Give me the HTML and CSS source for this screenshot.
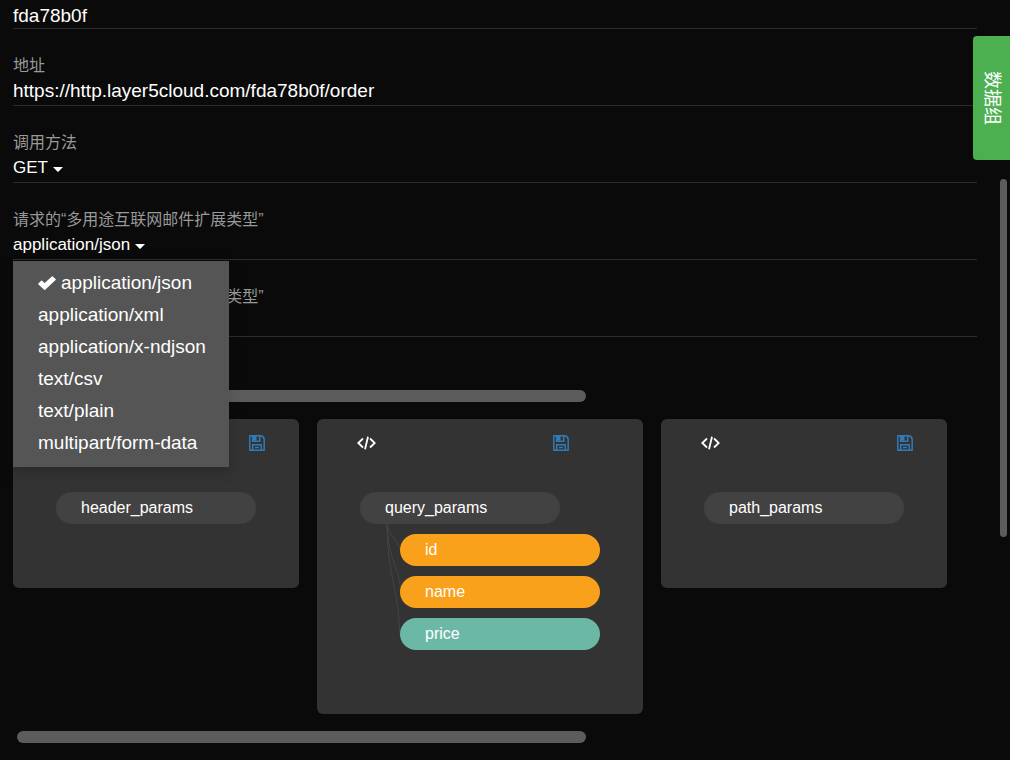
FILE: index.html
```html
<!DOCTYPE html>
<html lang="zh-CN">
<head>
<meta charset="utf-8">
<meta name="viewport" content="width=device-width, initial-scale=1">
<title>fda78b0f</title>
<link rel="stylesheet" href="styles.css">
</head>
<body>
<svg class="sprite" aria-hidden="true">
  <symbol id="caret" viewBox="0 0 10 5"><path d="M0 0h10L5.600 4.600a.9.9 0 0 1-1.200 0z" fill="currentColor"/></symbol>
  <symbol id="check" viewBox="0 0 18 14"><path d="M.9 8 3.600 5.300 6.600 8.100 14.300.9 17.100 3.600 6.700 13.300z" fill="currentColor" stroke="currentColor" stroke-width="1.400" stroke-linejoin="round"/></symbol>
  <symbol id="code" viewBox="0 0 19 14"><path d="M6 2.500 1.300 7 6 11.500M13 2.500 17.700 7 13 11.500M11 .8 8 13.200" fill="none" stroke="currentColor" stroke-width="1.800"/></symbol>
  <symbol id="save" viewBox="0 0 16 16"><path d="M.8.8h11.200q3.200 1 3.200 4v10.400H.8zM3.700 15V9.800h8.600V15M3.700 1v5.300h7V1M6 12.500h4" fill="none" stroke="currentColor" stroke-width="1.500"/><path d="M4 1h3.500v4.500H4z" fill="currentColor"/></symbol>
</svg>

<button class="side-tab" type="button">数据组</button>
<div class="page-scroll" aria-hidden="true"></div>

<main class="page">
  <form class="fields">
    <div class="field field-first">
      <input class="value" type="text" value="fda78b0f" aria-label="ID">
    </div>
    <div class="field">
      <label class="label" for="address">地址</label>
      <input class="value" id="address" type="text" value="https://http.layer5cloud.com/fda78b0f/order">
    </div>
    <div class="field">
      <label class="label" for="method">调用方法</label>
      <div class="value picker">
        <select class="select" id="method"><option>GET</option></select>
        <svg class="caret"><use href="#caret"/></svg>
      </div>
    </div>
    <div class="field">
      <label class="label" for="request-type">请求的“多用途互联网邮件扩展类型”</label>
      <button class="value picker" id="request-type" type="button" aria-haspopup="listbox" aria-expanded="true">application/json <svg class="caret"><use href="#caret"/></svg></button>
      <ul class="menu" role="listbox" aria-labelledby="request-type">
        <li class="option" role="option" aria-selected="true"><svg class="check"><use href="#check"/></svg>application/json</li>
        <li class="option" role="option">application/xml</li>
        <li class="option" role="option">application/x-ndjson</li>
        <li class="option" role="option">text/csv</li>
        <li class="option" role="option">text/plain</li>
        <li class="option" role="option">multipart/form-data</li>
      </ul>
    </div>
    <div class="field">
      <label class="label" for="response-type">响应的“多用途互联网邮件扩展类型”</label>
      <div class="value picker">
        <select class="select" id="response-type"><option>application/json</option></select>
        <svg class="caret"><use href="#caret"/></svg>
      </div>
    </div>
  </form>

  <section class="params">
    <div class="bar" aria-hidden="true"></div>
    <div class="cards">
      <article class="card">
        <div class="tools">
          <button class="tool" type="button" aria-label="代码"><svg class="icon-code"><use href="#code"/></svg></button>
          <button class="tool tool-save" type="button" aria-label="保存"><svg class="icon-save"><use href="#save"/></svg></button>
        </div>
        <div class="node">header_params</div>
      </article>
      <article class="card">
        <div class="tools">
          <button class="tool" type="button" aria-label="代码"><svg class="icon-code"><use href="#code"/></svg></button>
          <button class="tool tool-save" type="button" aria-label="保存"><svg class="icon-save"><use href="#save"/></svg></button>
        </div>
        <div class="node">query_params</div>
        <div class="children">
          <svg class="links" viewBox="0 0 16 112" aria-hidden="true"><path d="M1 0Q2 8 7 13T14 25M1 0Q2 24 9 42T14 68M1 0Q1 30 7 56T14 110"/></svg>
          <div class="node node-orange">id</div>
          <div class="node node-orange">name</div>
          <div class="node node-teal">price</div>
        </div>
      </article>
      <article class="card">
        <div class="tools">
          <button class="tool" type="button" aria-label="代码"><svg class="icon-code"><use href="#code"/></svg></button>
          <button class="tool tool-save" type="button" aria-label="保存"><svg class="icon-save"><use href="#save"/></svg></button>
        </div>
        <div class="node">path_params</div>
      </article>
    </div>
    <div class="bar" aria-hidden="true"></div>
  </section>
</main>
</body>
</html>
```
FILE: styles.css
```css
* { box-sizing: border-box; }

body {
  margin: 0;
  background: #0a0a0a;
  color: #fff;
  font-family: "Liberation Sans", "Noto Sans CJK SC", sans-serif;
  font-size: 19px;
}

button, input, select { font-family: inherit; }

.sprite { display: none; }

.page { padding: 0 33px 16px 13px; }

.field {
  position: relative;
  padding: 25px 0 2px;
  border-bottom: 1px solid #2c2c2c;
}

.field-first { padding: 3px 0 0; }

.label {
  display: block;
  color: #999;
  font-size: 16px;
  line-height: 24px;
}

.value {
  display: block;
  width: 100%;
  height: 25px;
  padding: 0;
  border: 0;
  outline: 0;
  background: none;
  color: #fff;
  font-size: 19px;
  line-height: 25px;
}

.picker {
  display: flex;
  align-items: center;
  gap: 5px;
  font-size: 17px;
}

.select {
  appearance: none;
  padding: 0;
  border: 0;
  background: none;
  color: #fff;
  font-size: 17px;
}

.caret { width: 10px; height: 5px; margin-top: 3px; }

.menu {
  position: absolute;
  top: calc(100% + 2px);
  left: 0;
  z-index: 2;
  min-width: 216px;
  margin: 0;
  padding: 6px 22px 8px 25px;
  background: #555;
  box-shadow: 0 6px 12px rgba(0, 0, 0, 0.18);
  list-style: none;
}

.option {
  display: flex;
  align-items: center;
  gap: 5px;
  line-height: 32px;
}

.check { width: 18px; height: 14px; }

.params {
  display: flex;
  flex-direction: column;
  gap: 17px;
  padding-top: 53px;
}

.bar {
  width: 59%;
  height: 12px;
  margin-left: 4px;
  border-radius: 6px;
  background: #5c5c5c;
}

.cards {
  display: flex;
  align-items: flex-start;
  gap: 18px;
}

.card {
  flex: none;
  padding: 15px 43px 64px;
  border-radius: 6px;
  background: #333;
}

.tools {
  display: flex;
  align-items: center;
  justify-content: space-between;
  width: 212px;
  height: 18px;
  margin: 0 -9px 40px -3px;
}

.tool {
  display: flex;
  padding: 0;
  border: 0;
  background: none;
  color: #fff;
}

.tool-save { color: #337ab7; }

.icon-code { width: 19px; height: 14px; }
.icon-save { width: 16px; height: 16px; }

.node {
  position: relative;
  width: 200px;
  padding: 0 25px;
  border-radius: 16px;
  background: #424242;
  font-size: 16px;
  line-height: 32px;
}

.children {
  position: relative;
  display: grid;
  gap: 10px;
  margin: 10px 0 0 40px;
}

.links {
  position: absolute;
  top: -10px;
  left: -14px;
  width: 16px;
  height: 112px;
  fill: none;
  stroke: #444;
}

.node-orange { background: #f9a11b; }
.node-teal { background: #6bb8a7; }

.side-tab {
  position: fixed;
  top: 36px;
  right: 0;
  z-index: 3;
  padding: 35px 6px;
  border: 0;
  border-radius: 4px 0 0 4px;
  background: #4caf50;
  color: #fff;
  font-size: 18px;
  line-height: 25px;
  writing-mode: vertical-rl;
  text-orientation: sideways;
}

.page-scroll {
  position: fixed;
  top: 179px;
  right: 3px;
  width: 7px;
  height: 358px;
  border-radius: 4px;
  background: #5c5c5c;
}
```
